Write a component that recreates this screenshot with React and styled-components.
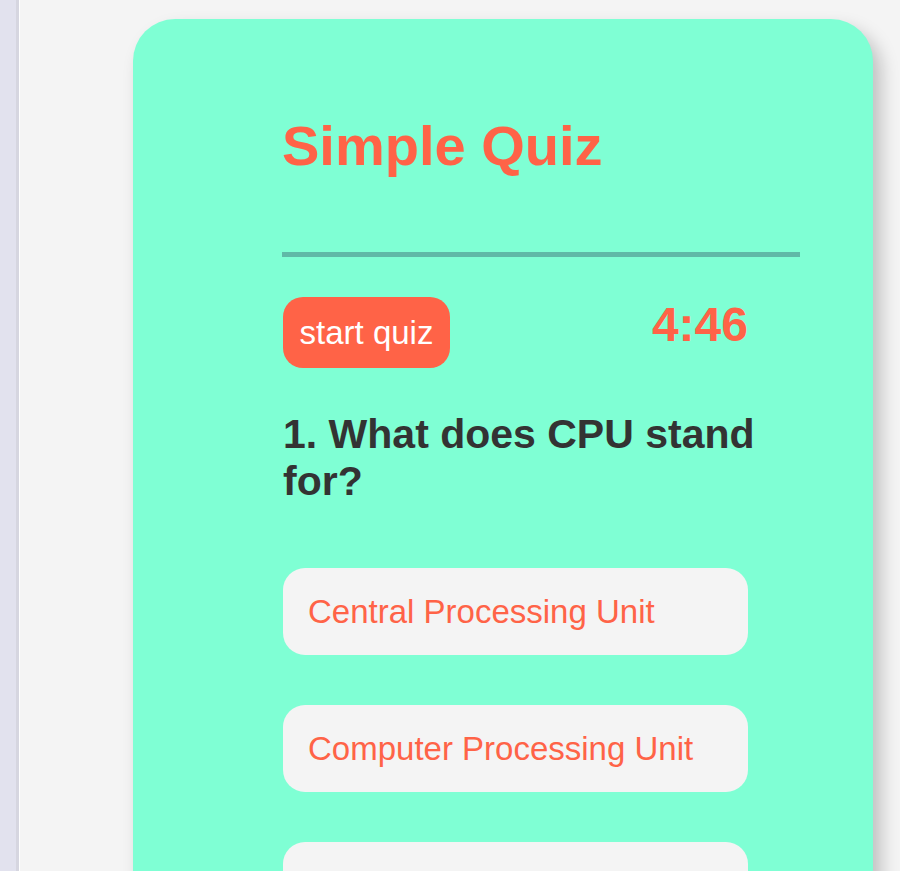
import React from 'react';
import styled, { createGlobalStyle } from 'styled-components';

const GlobalStyle = createGlobalStyle`
  html, body {
    margin: 0;
    padding: 0;
    background: #f4f4f4;
    font-family: 'Liberation Sans', Arial, sans-serif;
  }
`;

const Page = styled.div`
  display: flex;
  height: 871px;
  overflow: hidden;
`;

const SideStrip = styled.div`
  flex: 0 0 16px;
  background: #e2e2ee;
  border-right: 3px solid #d6d6e0;
  box-shadow: 1px 0 0 #ffffff;
`;

const Main = styled.main`
  flex: 1;
  padding: 19px 0 0 114px;
`;

const Card = styled.section`
  width: 740px;
  min-height: 1000px;
  box-sizing: border-box;
  padding: 94px 73px 0 149px;
  background: #7fffd4;
  border-radius: 42px 42px 0 0;
  box-shadow: 8px 10px 18px rgba(0, 0, 0, 0.22);
`;

const Title = styled.h1`
  margin: 0;
  font-size: 56px;
  font-weight: 700;
  color: #ff6347;
`;

const Divider = styled.hr`
  margin: 74px 0 0;
  height: 5px;
  border: none;
  background: #60b9a7;
`;

const Controls = styled.div`
  width: 466px;
  margin-top: 40px;
  display: flex;
  justify-content: space-between;
  align-items: flex-start;
`;

const StartButton = styled.button`
  width: 167px;
  height: 71px;
  margin-left: 1px;
  border: none;
  border-radius: 20px;
  background: #ff6347;
  color: #ffffff;
  font-family: 'Liberation Sans', Arial, sans-serif;
  font-size: 33px;
  padding: 0;
  cursor: pointer;
`;

const Timer = styled.div`
  font-size: 48px;
  font-weight: 700;
  color: #ff6347;
`;

const Question = styled.h2`
  width: 480px;
  margin: 43px 0 0 1px;
  font-size: 41px;
  line-height: 47px;
  font-weight: 700;
  color: #333333;
`;

const OptionList = styled.div`
  margin-top: 63px;
  display: flex;
  flex-direction: column;
  gap: 50px;
`;

const Option = styled.div`
  width: 465px;
  height: 87px;
  margin-left: 1px;
  box-sizing: border-box;
  padding: 0 25px;
  display: flex;
  align-items: center;
  border-radius: 22px;
  background: #f4f4f4;
  color: #ff6347;
  font-size: 33px;
`;

const options = [
  'Central Processing Unit',
  'Computer Processing Unit',
  'Central Program Unit',
  'Control Processing Unit',
];

export default function App() {
  return (
    <>
      <GlobalStyle />
      <Page>
        <SideStrip />
        <Main>
          <Card>
            <Title>Simple Quiz</Title>
            <Divider />
            <Controls>
              <StartButton>start quiz</StartButton>
              <Timer>4:46</Timer>
            </Controls>
            <Question>1. What does CPU stand for?</Question>
            <OptionList>
              {options.map((o) => (
                <Option key={o}>{o}</Option>
              ))}
            </OptionList>
          </Card>
        </Main>
      </Page>
    </>
  );
}
